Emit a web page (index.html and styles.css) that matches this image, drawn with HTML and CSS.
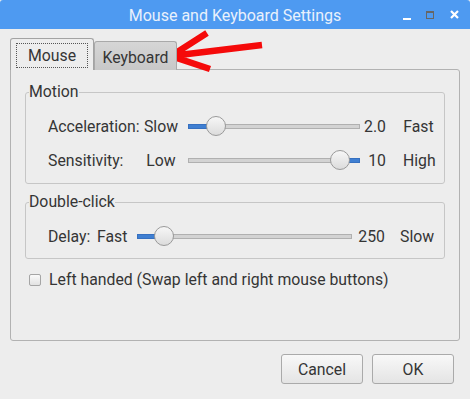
FILE: index.html
```html
<!DOCTYPE html>
<html lang="en">
<head>
    <meta charset="UTF-8">
    <title>Mouse and Keyboard Settings</title>
    <link rel="stylesheet" href="styles.css">
</head>
<body>
    <div class="window">
        <div class="titlebar">
            <span class="title">Mouse and Keyboard Settings</span>
            <div class="controls">
                <span class="ctl ctl-min"></span>
                <span class="ctl ctl-max"></span>
                <svg class="ctl-close" width="9" height="9" viewBox="0 0 9 9">
                    <path d="M1 1 L8 8 M8 1 L1 8" stroke="#fff" stroke-width="2.2"/>
                </svg>
            </div>
        </div>

        <div class="content">
            <div class="tabs">
                <div class="tab tab-active"><span class="focus">Mouse</span></div>
                <div class="tab">Keyboard</div>
            </div>

            <div class="notebook">
                <fieldset class="frame frame-motion">
                    <legend>Motion</legend>
                    <div class="row">
                        <span class="name">Acceleration:</span>
                        <span class="min">Slow</span>
                        <div class="slider">
                            <div class="fill" style="width: 27px"></div>
                            <div class="knob" style="left: 27px"></div>
                        </div>
                        <span class="value">2.0</span>
                        <span class="max">Fast</span>
                    </div>
                    <div class="row">
                        <span class="name">Sensitivity:</span>
                        <span class="min">Low</span>
                        <div class="slider">
                            <div class="fill fill-right" style="width: 22px"></div>
                            <div class="knob" style="left: 151px"></div>
                        </div>
                        <span class="value">10</span>
                        <span class="max">High</span>
                    </div>
                </fieldset>

                <fieldset class="frame frame-click">
                    <legend>Double-click</legend>
                    <div class="row row-delay">
                        <span class="name">Delay:</span>
                        <span class="min">Fast</span>
                        <div class="slider">
                            <div class="fill" style="width: 26px"></div>
                            <div class="knob" style="left: 26px"></div>
                        </div>
                        <span class="value">250</span>
                        <span class="max">Slow</span>
                    </div>
                </fieldset>

                <label class="check">
                    <span class="box"></span>
                    Left handed (Swap left and right mouse buttons)
                </label>
            </div>

            <div class="buttons">
                <button>Cancel</button>
                <button>OK</button>
            </div>
        </div>

        <!-- red annotation arrow -->
        <svg class="arrow" width="115" height="55" viewBox="0 0 115 55">
            <path d="M107 20 L16 31 M52 8 L16 31 L55 44" stroke="#f50a0a" stroke-width="6.5" fill="none"/>
        </svg>
    </div>
</body>
</html>
```

FILE: styles.css
```css
* {
    box-sizing: border-box;
}

body {
    margin: 0;
    background: #ededed;
    font-family: Roboto, 'Noto Sans', sans-serif;
    font-size: 15.8px;
    color: #353535;
}

.window {
    position: relative;
    width: 470px;
    height: 399px;
    background: #ededed;
    border-radius: 3px 3px 0 0;
    overflow: hidden;
}

.titlebar {
    height: 29px;
    background: #4e9af1;
    display: flex;
    align-items: center;
    justify-content: center;
    position: relative;
}

.title {
    color: #e9f1fc;
    font-size: 16px;
    margin-top: 1px;
}

.controls {
    position: absolute;
    right: 11px;
    top: 0;
    height: 29px;
    display: flex;
    align-items: center;
    gap: 15px;
}

.ctl-min {
    width: 8px;
    height: 2px;
    background: #fff;
    margin-top: 9px;
}

.ctl-max {
    width: 8px;
    height: 8px;
    border: 1px solid #666;
    border-top-width: 2px;
}

.ctl-close {
    display: block;
    margin-left: 1px;
}

.content {
    padding: 9px 10px 0 10px;
}

.tabs {
    display: flex;
    align-items: flex-end;
    height: 32px;
    position: relative;
    z-index: 1;
}

.tab {
    height: 29px;
    width: 83px;
    border: 1px solid #a9a9a9;
    border-bottom: none;
    border-radius: 3px 3px 0 0;
    background: linear-gradient(#d6d6d6, #c8c8c8);
    display: flex;
    align-items: center;
    justify-content: center;
    padding-top: 2px;
}

.tab-active {
    height: 32px;
    width: 84px;
    background: #ededed;
    border-color: #a3a3a3;
    padding-top: 0;
}

.focus {
    border: 1px dotted #555;
    width: 72px;
    height: 25px;
    display: flex;
    align-items: center;
    justify-content: center;
    margin-top: 2px;
}

.notebook {
    height: 272px;
    margin-top: -1px;
    border: 1px solid #b2b2b2;
    border-radius: 0 3px 3px 3px;
    padding: 13px 14px 0 14px;
}

.frame {
    margin: 0;
    padding: 13px 10px 11px 22px;
    border: 1px solid #c6c6c6;
    border-radius: 3px;
    min-width: 0;
}

.frame legend {
    padding: 0;
    margin-left: -19px;
    line-height: 18px;
}

.frame-click {
    margin-top: 9px;
    padding-bottom: 10px;
}

.row {
    display: flex;
    align-items: center;
    height: 24px;
}

.row + .row {
    margin-top: 10px;
}

.name {
    width: 92px;
}

.min {
    width: 42px;
    text-align: center;
}

.slider {
    position: relative;
    width: 172px;
    height: 5px;
    margin-left: 6px;
    background: #d3d3d3;
    border: 1px solid #b0b0b0;
}

.fill {
    position: absolute;
    left: -1px;
    top: -1px;
    height: 5px;
    background: #3f7fd2;
    border: 1px solid #3670c0;
}

.fill-right {
    left: auto;
    right: -1px;
}

.knob {
    position: absolute;
    top: -9px;
    width: 20px;
    height: 20px;
    margin-left: -10px;
    border-radius: 50%;
    border: 1px solid #9a9a9a;
    background: linear-gradient(#f7f7f7, #dcdcdc);
}

.value {
    width: 26px;
    text-align: right;
}

.max {
    width: 31px;
    margin-left: 17px;
    text-align: center;
}

.row-delay .name {
    width: 49px;
}

.row-delay .min {
    width: 31px;
    text-align: left;
}

.row-delay .slider {
    width: 215px;
    margin-left: 9px;
}

.row-delay .value {
    width: 33px;
}

.row-delay .max {
    width: 34px;
    margin-left: 15px;
}

.check {
    display: flex;
    align-items: center;
    gap: 8px;
    margin-top: 11px;
    padding-left: 4px;
}

.box {
    width: 12px;
    height: 12px;
    border: 1px solid #a5a5a5;
    border-radius: 2px;
    background: linear-gradient(#fafafa, #e2e2e2);
}

.buttons {
    display: flex;
    justify-content: flex-end;
    gap: 9px;
    margin-top: 13px;
    padding-right: 6px;
}

button {
    width: 82px;
    height: 30px;
    font-family: inherit;
    font-size: 15.8px;
    color: #353535;
    border: 1px solid #aaa;
    border-radius: 3px;
    background: linear-gradient(#f8f8f8, #e4e4e4);
}

.arrow {
    position: absolute;
    left: 155px;
    top: 25px;
}
```
